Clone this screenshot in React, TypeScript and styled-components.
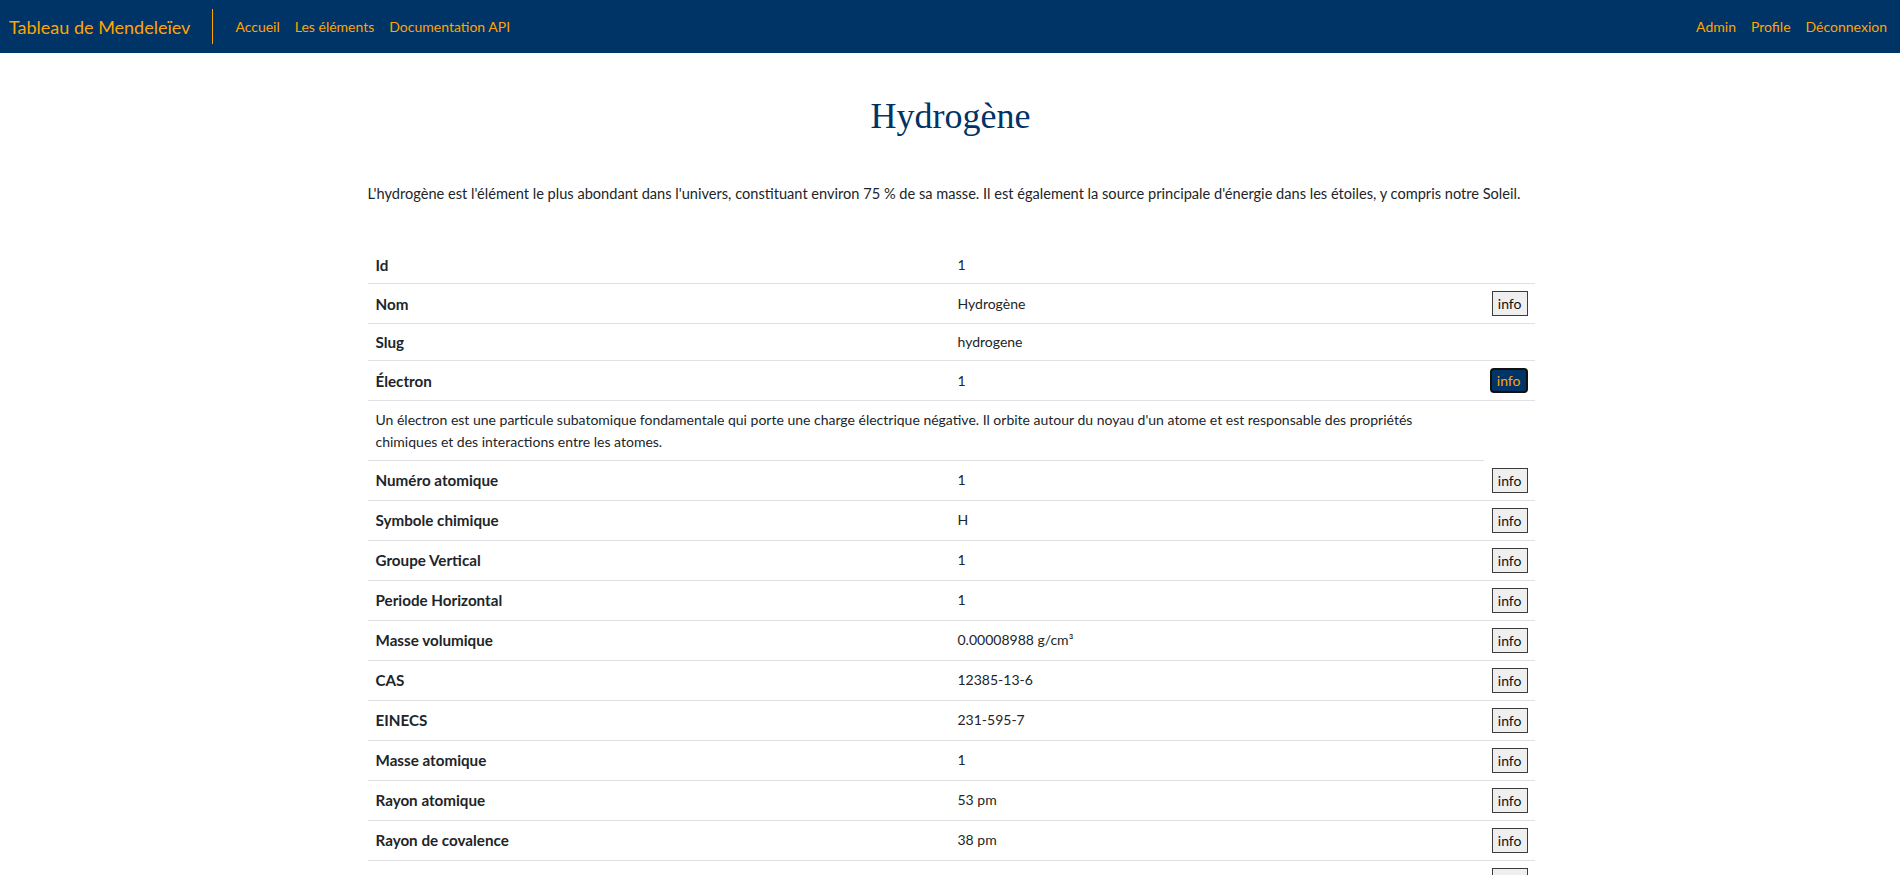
import React from "react";
import styled, { createGlobalStyle } from "styled-components";

const GlobalStyle = createGlobalStyle`
  html, body {
    margin: 0;
    padding: 0;
    background: #fff;
    font-family: Lato, "Noto Sans", sans-serif;
    color: #212529;
  }
  * {
    box-sizing: border-box;
  }
`;

const Nav = styled.nav`
  display: flex;
  align-items: center;
  justify-content: space-between;
  height: 53px;
  padding: 0 13px 0 9px;
  background-color: #003366;
`;

const NavGroup = styled.div`
  display: flex;
  align-items: center;
  gap: 15px;
`;

const Brand = styled.a`
  font-size: 18px;
  color: #ffa500;
  text-decoration: none;
`;

const Divider = styled.span`
  width: 1px;
  height: 35px;
  margin: 0 7px;
  background-color: #ffa500;
`;

const NavLink = styled.a`
  font-size: 14px;
  color: #ffa500;
  text-decoration: none;
`;

const Main = styled.main`
  width: 1167px;
  margin: 0 auto;
  padding-left: 1px;
`;

const Title = styled.h1`
  margin: 42px 0 0;
  font-family: "Liberation Serif", serif;
  font-size: 36px;
  font-weight: normal;
  line-height: 43px;
  text-align: center;
  color: #003366;
`;

const Intro = styled.p`
  margin: 45px 0 0;
  font-size: 14.6px;
  line-height: 21px;
`;

const Table = styled.table`
  width: 100%;
  margin-top: 43px;
  border-collapse: collapse;
  table-layout: fixed;
  font-size: 14px;
  line-height: 20px;
`;

const Row = styled.tr``;

const LabelCell = styled.td`
  padding: 8px;
  font-size: 15.2px;
  font-weight: bold;
  border-bottom: 1px solid #dee2e6;
`;

const ValueCell = styled.td`
  padding: 8px;
  border-bottom: 1px solid #dee2e6;
`;

const ActionCell = styled.td`
  padding: 7px 7px 7px 6px;
  text-align: right;
  border-bottom: 1px solid #dee2e6;
`;

const DescriptionCell = styled.td`
  padding: 8px;
  line-height: 21.5px;
  border-bottom: 1px solid #dee2e6;
`;

const InfoButton = styled.button<{ $active?: boolean }>`
  height: 25px;
  padding: 0 5px;
  font-family: Lato, "Noto Sans", sans-serif;
  font-size: 14px;
  font-weight: 400;
  vertical-align: middle;
  cursor: pointer;
  color: ${({ $active }) => ($active ? "#ffa500" : "#111")};
  background-color: ${({ $active }) => ($active ? "#003366" : "#efefef")};
  border: ${({ $active }) => ($active ? "2px solid #111" : "1px solid #3c3c3c")};
  border-radius: ${({ $active }) => ($active ? "4px" : "0")};
`;

type Prop = {
  label: string;
  value: string;
  info?: boolean;
  active?: boolean;
  description?: string;
};

const properties: Prop[] = [
  { label: "Id", value: "1" },
  { label: "Nom", value: "Hydrogène", info: true },
  { label: "Slug", value: "hydrogene" },
  {
    label: "Électron",
    value: "1",
    info: true,
    active: true,
    description:
      "Un électron est une particule subatomique fondamentale qui porte une charge électrique négative. Il orbite autour du noyau d'un atome et est responsable des propriétés chimiques et des interactions entre les atomes.",
  },
  { label: "Numéro atomique", value: "1", info: true },
  { label: "Symbole chimique", value: "H", info: true },
  { label: "Groupe Vertical", value: "1", info: true },
  { label: "Periode Horizontal", value: "1", info: true },
  { label: "Masse volumique", value: "0.00008988 g/cm³", info: true },
  { label: "CAS", value: "12385-13-6", info: true },
  { label: "EINECS", value: "231-595-7", info: true },
  { label: "Masse atomique", value: "1", info: true },
  { label: "Rayon atomique", value: "53 pm", info: true },
  { label: "Rayon de covalence", value: "38 pm", info: true },
  { label: "Rayon de Van der Waals", value: "120 pm", info: true },
  { label: "Électronégativité", value: "2.2", info: true },
];

const App: React.FC = () => {
  return (
    <>
      <GlobalStyle />
      <Nav>
        <NavGroup>
          <Brand href="#">Tableau de Mendeleïev</Brand>
          <Divider />
          <NavLink href="#">Accueil</NavLink>
          <NavLink href="#">Les éléments</NavLink>
          <NavLink href="#">Documentation API</NavLink>
        </NavGroup>
        <NavGroup>
          <NavLink href="#">Admin</NavLink>
          <NavLink href="#">Profile</NavLink>
          <NavLink href="#">Déconnexion</NavLink>
        </NavGroup>
      </Nav>
      <Main>
        <Title>Hydrogène</Title>
        <Intro>
          L'hydrogène est l'élément le plus abondant dans l'univers, constituant environ 75 % de sa
          masse. Il est également la source principale d'énergie dans les étoiles, y compris notre
          Soleil.
        </Intro>
        <Table>
          <colgroup>
            <col style={{ width: 582 }} />
            <col style={{ width: 534 }} />
            <col style={{ width: 51 }} />
          </colgroup>
          <tbody>
            {properties.map((p) => (
              <React.Fragment key={p.label}>
                <Row>
                  <LabelCell>{p.label}</LabelCell>
                  <ValueCell>{p.value}</ValueCell>
                  <ActionCell>
                    {p.info && <InfoButton $active={p.active}>info</InfoButton>}
                  </ActionCell>
                </Row>
                {p.description && (
                  <Row>
                    <DescriptionCell colSpan={2}>{p.description}</DescriptionCell>
                  </Row>
                )}
              </React.Fragment>
            ))}
          </tbody>
        </Table>
      </Main>
    </>
  );
};

export default App;
